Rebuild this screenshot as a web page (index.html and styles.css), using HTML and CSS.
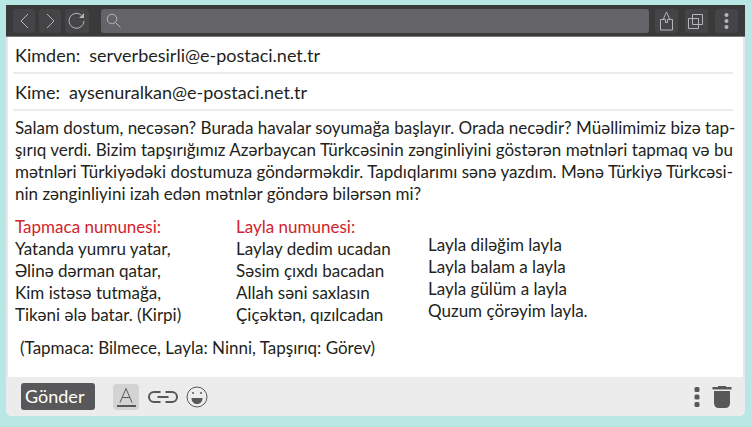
FILE: index.html
```html
<!DOCTYPE html>
<html lang="az">

<head>
    <meta charset="UTF-8">
    <meta name="viewport" content="width=device-width, initial-scale=1.0">
    <title>E-posta</title>
    <link rel="stylesheet" href="styles.css">
</head>

<body>
    <main class="window">
        <header class="toolbar">
            <div class="tools tools-nav">
                <button class="tool" type="button" aria-label="Geri">
                    <svg width="22" height="24" viewBox="0 0 22 24"><path d="M15 5L8 12l7 7"/></svg>
                </button>
                <button class="tool" type="button" aria-label="İleri">
                    <svg width="22" height="24" viewBox="0 0 22 24"><path d="M8 5l7 7-7 7"/></svg>
                </button>
                <button class="tool" type="button" aria-label="Yenile">
                    <svg width="24" height="24" viewBox="0 0 24 24"><path d="M16 5.800A7.500 7.500 0 1 0 19 12"/><path class="solid" d="M19 4v5h-5z"/></svg>
                </button>
            </div>
            <label class="search">
                <svg width="16" height="16" viewBox="0 0 16 16"><circle cx="6" cy="6" r="4.800"/><path d="M9.500 9.500l5 5"/></svg>
                <input class="search-input" type="text" aria-label="Ara">
            </label>
            <div class="tools">
                <button class="tool" type="button" aria-label="Paylaş">
                    <svg width="23" height="24" viewBox="0 0 23 24"><path d="M9.500 10.500h-4v10.500h12V10.500h-4M11.500 3L8.500 9.500l2 1v3h2v-3l2-1z"/></svg>
                </button>
                <button class="tool" type="button" aria-label="Sekmeler">
                    <svg width="23" height="24" viewBox="0 0 23 24"><path d="M3.500 9.500h10v10h-10zM7.500 5.500h10v10h-10z"/></svg>
                </button>
                <button class="tool" type="button" aria-label="Menü">
                    <svg width="23" height="24" viewBox="0 0 23 24"><g class="solid"><circle cx="11.500" cy="6" r="2"/><circle cx="11.500" cy="12" r="2"/><circle cx="11.500" cy="18" r="2"/></g></svg>
                </button>
            </div>
        </header>

        <section class="mail">
            <div class="field">
                <label for="from">Kimden:</label>
                <input id="from" class="field-input" type="text" value="serverbesirli@e-postaci.net.tr">
            </div>
            <div class="field">
                <label for="to">Kime:</label>
                <input id="to" class="field-input" type="text" value="aysenuralkan@e-postaci.net.tr">
            </div>

            <div class="message">
                <p class="intro">
                    <span class="line">Salam dostum, necəsən? Burada havalar soyumağa başlayır. Orada necədir? Müəllimimiz bizə tap-</span>
                    <span class="line">şırıq verdi. Bizim tapşırığımız Azərbaycan Türkcəsinin zənginliyini göstərən mətnləri tapmaq və bu</span>
                    <span class="line">mətnləri Türkiyədəki dostumuza göndərməkdir. Tapdıqlarımı sənə yazdım. Mənə Türkiyə Türkcəsi-</span>
                    <span class="line line-last">nin zənginliyini izah edən mətnlər göndərə bilərsən mi?</span>
                </p>

                <div class="poems">
                    <div class="poem">
                        <h2 class="poem-title">Tapmaca numunesi:</h2>
                        <p>Yatanda yumru yatar,<br>Əlinə dərman qatar,<br>Kim istəsə tutmağa,<br>Tikəni ələ batar. (Kirpi)</p>
                    </div>
                    <div class="poem">
                        <h2 class="poem-title">Layla numunesi:</h2>
                        <p>Laylay dedim ucadan<br>Səsim çıxdı bacadan<br>Allah səni saxlasın<br>Çiçəktən, qızılcadan</p>
                    </div>
                    <div class="poem poem-untitled">
                        <p>Layla diləğim layla<br>Layla balam a layla<br>Layla gülüm a layla<br>Quzum çörəyim layla.</p>
                    </div>
                </div>

                <p class="glossary">(Tapmaca: Bilmece, Layla: Ninni, Tapşırıq: Görev)</p>
            </div>
        </section>

        <footer class="actions">
            <button class="send" type="button">Gönder</button>
            <button class="action action-font" type="button" aria-label="Yazı biçimi">
                <svg width="26" height="26" viewBox="0 0 26 26"><path d="M7 18.500L13 4.500l6 14M9.300 13.500h7.400"/><path class="thick" d="M4 22h19"/></svg>
            </button>
            <button class="action action-link" type="button" aria-label="Bağlantı">
                <svg width="30" height="14" viewBox="0 0 30 14"><g class="thick"><path d="M12.500 2H6a5 5 0 0 0 0 10h6.500M17.500 2H24a5 5 0 0 1 0 10h-6.500M9.500 7h11"/></g></svg>
            </button>
            <button class="action" type="button" aria-label="Gülen yüz">
                <svg width="22" height="22" viewBox="0 0 22 22"><circle cx="11" cy="11" r="10"/><g class="solid"><circle cx="7" cy="7" r="1"/><circle cx="15" cy="7" r="1"/><path d="M5.500 12h11c0 8-11 8-11 0z"/></g></svg>
            </button>
            <button class="action action-more" type="button" aria-label="Diğer">
                <svg width="6" height="20" viewBox="0 0 6 20"><g class="solid"><rect x=".5" width="5" height="5" rx="1.500"/><rect x=".5" y="7.500" width="5" height="5" rx="1.500"/><rect x=".5" y="15" width="5" height="5" rx="1.500"/></g></svg>
            </button>
            <button class="action" type="button" aria-label="Sil">
                <svg width="20" height="22" viewBox="0 0 20 22"><path class="solid" d="M6 0h8v1h5.500v2.500H.5V1H6zM2 5h16v12q0 5-5 5H7q-5 0-5-5z"/></svg>
            </button>
        </footer>
    </main>
</body>

</html>
```
FILE: styles.css
```css
* {
    box-sizing: border-box;
}

body {
    margin: 0;
    padding: 5px 7px 11px 6px;
    min-height: 100vh;
    display: flex;
    background-color: #b9e7e4;
    color: #231f20;
    font-family: "Lato", "Open Sans", sans-serif;
    font-size: 17px;
    line-height: 22px;
}

h2,
p {
    margin: 0;
    font-size: inherit;
    font-weight: normal;
}

button,
input {
    margin: 0;
    padding: 0;
    border: 0;
    background: none;
    color: inherit;
    font: inherit;
}

svg {
    display: block;
    fill: none;
    stroke: currentColor;
}

.solid {
    fill: currentColor;
    stroke: none;
}

.thick {
    stroke-width: 2;
}

.window {
    flex: 1;
    min-width: 0;
    display: flex;
    flex-direction: column;
    border-radius: 0 0 6px 6px;
    overflow: hidden;
    background-color: #ffffff;
}

.toolbar {
    display: flex;
    align-items: center;
    gap: 6px;
    padding: 4px 7px 3px;
    background-color: #3a3a3b;
    border-bottom: 1px solid #77787a;
    color: #b5b6b8;
}

.tools {
    display: flex;
    gap: 7px;
}

.tools-nav {
    gap: 4px;
    margin-right: 6px;
}

.tool {
    border-radius: 3px;
    background-color: #454547;
}

.search {
    flex: 1;
    min-width: 0;
    height: 24px;
    display: flex;
    align-items: center;
    padding: 0 5px;
    border-radius: 3px;
    background-color: #646367;
}

.search-input {
    flex: 1;
    min-width: 0;
    padding-left: 6px;
}

.mail {
    flex: 1;
    padding: 0 10px 0 5px;
    border: solid #e6e7e8;
    border-width: 0 2px;
}

.field {
    display: flex;
    gap: 9px;
    padding: 7px 1px 6px 2px;
    border-bottom: 2px solid #ebebec;
    font-size: 18px;
}

.field-input {
    flex: 1;
    min-width: 0;
}

.message {
    padding: 6px 0 0 2px;
}

.line {
    display: block;
    white-space: nowrap;
    text-align: justify;
    text-align-last: justify;
}

.line-last {
    text-align-last: left;
}

.poems {
    display: grid;
    grid-template-columns: 221px 192px 1fr;
    padding-top: 11px;
}

.poem-title {
    color: #d2232a;
}

.poem-untitled {
    padding-top: 18px;
}

.glossary {
    padding: 11px 5px;
}

.actions {
    display: flex;
    align-items: center;
    padding: 6px 13px 6px 15px;
    background-color: #ececec;
    color: #58585a;
}

.send {
    padding: 2px 11px 3px 4px;
    border-radius: 3px;
    background-color: #58585a;
    color: #ffffff;
    font-size: 18px;
}

.action-font {
    margin: 0 9px 0 18px;
    border-radius: 4px;
    background-color: #d3d3d4;
}

.action-link {
    margin-right: 8px;
}

.action-more {
    margin: 0 12px 0 auto;
}
```
